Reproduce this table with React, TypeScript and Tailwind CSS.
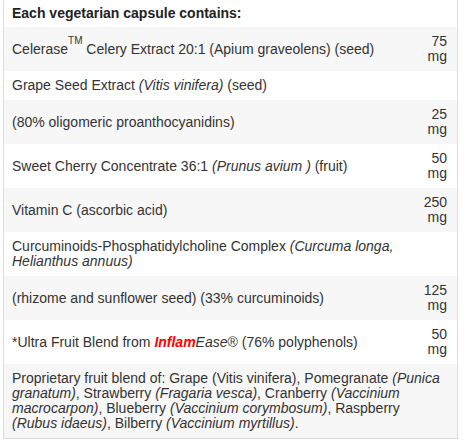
import type { ReactNode } from 'react'

interface Ingredient {
  label: ReactNode
  amount?: string
}

const INGREDIENTS: Ingredient[] = [
  {
    label: (
      <>
        Celerase<sup className="text-[10px] align-[5px]">TM</sup> Celery Extract 20:1 (Apium graveolens) (seed)
      </>
    ),
    amount: '75'
  },
  {
    label: (
      <>
        Grape Seed Extract <i>(Vitis vinifera)</i> (seed)
      </>
    )
  },
  { label: '(80% oligomeric proanthocyanidins)', amount: '25' },
  {
    label: (
      <>
        Sweet Cherry Concentrate 36:1 <i>(Prunus avium )</i> (fruit)
      </>
    ),
    amount: '50'
  },
  { label: 'Vitamin C (ascorbic acid)', amount: '250' },
  {
    label: (
      <>
        Curcuminoids-Phosphatidylcholine Complex <i>(Curcuma longa, Helianthus annuus)</i>
      </>
    )
  },
  { label: '(rhizome and sunflower seed) (33% curcuminoids)', amount: '125' },
  {
    label: (
      <>
        *Ultra Fruit Blend from{' '}
        <i>
          <b className="text-[#ff0000]">Inflam</b>Ease
        </i>
        ® (76% polyphenols)
      </>
    ),
    amount: '50'
  }
]

export default function App() {
  return (
    <div className="min-h-screen bg-white font-['Liberation_Sans',Arial,sans-serif] text-[14px] leading-[15px] text-[#333]">
      <div className="ml-[3px] w-[455px] border-x border-b border-[#dddddd]">
        <table className="w-full border-collapse">
          <tbody>
            <tr>
              <th colSpan={2} className="py-[6px] pl-[8px] text-left font-bold text-[#222]">
                Each vegetarian capsule contains:
              </th>
            </tr>
            {INGREDIENTS.map((item, index) => (
              <tr key={index} className={index % 2 === 0 ? 'bg-[#f7f7f7]' : 'bg-white'}>
                <td className="py-[7px] pl-[8px] pr-2 align-middle">{item.label}</td>
                <td className="w-[46px] py-[7px] pr-[10px] text-right align-middle">
                  {item.amount && (
                    <>
                      {item.amount}
                      <br />
                      mg
                    </>
                  )}
                </td>
              </tr>
            ))}
            {/* proprietary blend spans both columns */}
            <tr className="bg-[#f7f7f7]">
              <td colSpan={2} className="py-[7px] pl-[8px] pr-[10px] align-middle">
                Proprietary fruit blend of: Grape (Vitis vinifera), Pomegranate <i>(Punica granatum)</i>, Strawberry{' '}
                <i>(Fragaria vesca)</i>, Cranberry <i>(Vaccinium macrocarpon)</i>, Blueberry{' '}
                <i>(Vaccinium corymbosum)</i>, Raspberry <i>(Rubus idaeus)</i>, Bilberry{' '}
                <i>(Vaccinium myrtillus)</i>.
              </td>
            </tr>
          </tbody>
        </table>
      </div>
    </div>
  )
}
